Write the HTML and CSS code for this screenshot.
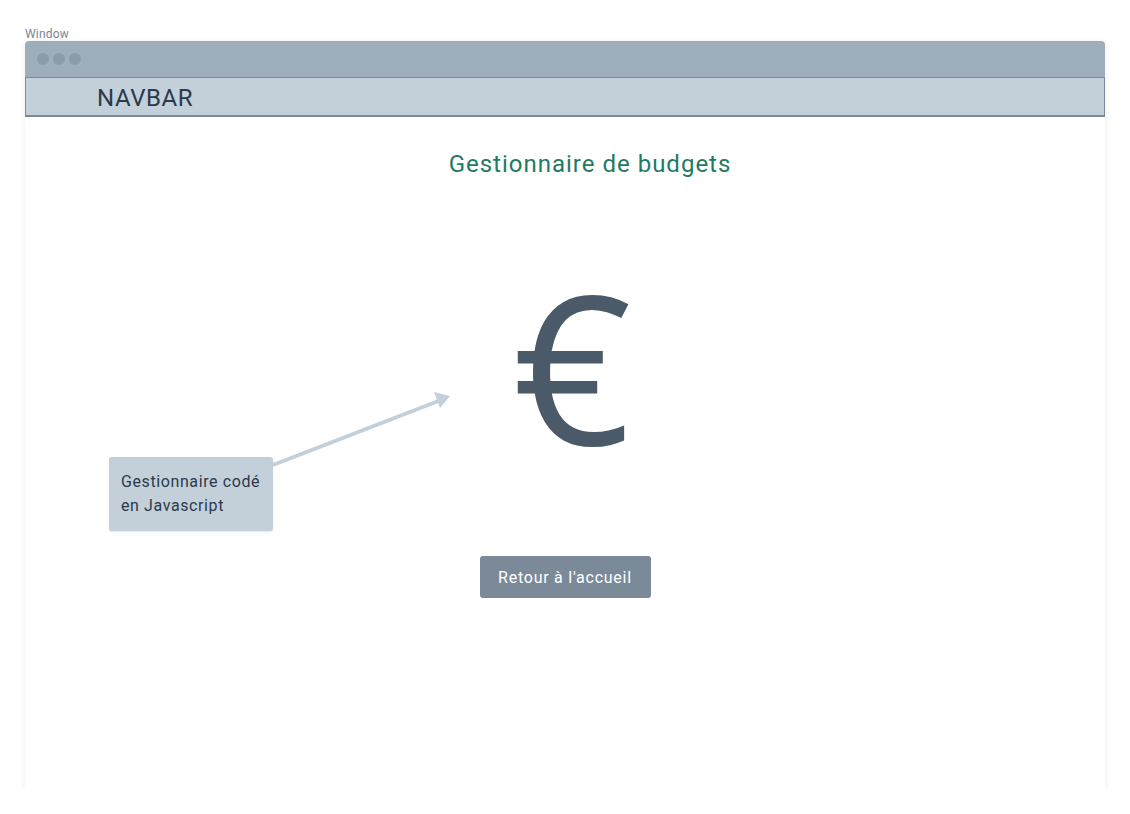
FILE: index.html
```html
<!DOCTYPE html>
<html lang="fr">
<head>
<meta charset="utf-8">
<title>Gestionnaire de budgets</title>
<link rel="stylesheet" href="styles.css">
</head>
<body>
<div class="page">
  <div class="label">Window</div>
  <div class="window">
    <div class="titlebar">
      <span class="dot"></span><span class="dot"></span><span class="dot"></span>
    </div>
    <div class="navbar">NAVBAR</div>
    <div class="content">
      <h1 class="title">Gestionnaire de budgets</h1>
      <div class="euro">€</div>
      <button class="btn">Retour à l'accueil</button>
      <svg class="arrow" width="200" height="90" viewBox="0 0 200 90">
        <line x1="2" y1="86" x2="170" y2="21" stroke="#c4d0d9" stroke-width="4"/>
        <polygon points="179,17 163,13 169,29" fill="#c4d0d9"/>
      </svg>
      <div class="note">Gestionnaire codé<br>en Javascript</div>
    </div>
  </div>
</div>
</body>
</html>
```
FILE: styles.css
```css
* { box-sizing: border-box; }
html, body { margin: 0; padding: 0; background: #fff; }
body { font-family: Roboto, "Noto Sans", sans-serif; }
.page { padding: 27px 25px 0 25px; width: 1130px; }
.label { font-size: 12px; color: #7b8692; line-height: 14px; height: 14px; letter-spacing: 0.2px; }
.window {
  width: 1080px;
  height: 748px;
  display: flex;
  flex-direction: column;
  background: #fff;
  border-radius: 4px 4px 0 0;
  box-shadow: 0 1px 6px rgba(0,0,0,0.08);
}
.titlebar {
  height: 36px;
  background: #9eadba;
  border-radius: 4px 4px 0 0;
  display: flex;
  align-items: center;
  gap: 4px;
  padding-left: 12px;
}
.dot { width: 12px; height: 12px; border-radius: 50%; background: #8c9ba8; }
.navbar {
  height: 40px;
  background: #c4d0d9;
  border: 1px solid #7b8a99;
  border-bottom-width: 2px;
  padding: 2px 0 0 71px;
  font-size: 24px;
  letter-spacing: 0.6px;
  color: #2a3a4b;
  display: flex;
  align-items: center;
}
.content {
  position: relative;
  flex: 1;
  display: flex;
  flex-direction: column;
  align-items: center;
}
.title {
  margin: 32px 0 0 50px;
  font-size: 24px;
  font-weight: 400;
  color: #1f7a63;
  letter-spacing: 1px;
  line-height: 30px;
}
.euro {
  margin-top: 76px;
  margin-left: 14px;
  font-family: "Open Sans", sans-serif;
  font-size: 208px;
  line-height: 220px;
  color: #4a5a69;
}
.btn {
  margin-top: 81px;
  width: 171px;
  height: 42px;
  border: none;
  border-radius: 3px;
  background: #7a8a99;
  color: #fff;
  font-family: Roboto, sans-serif;
  font-size: 16px;
  letter-spacing: 0.75px;
}
.arrow { position: absolute; left: 246px; top: 262px; }
.note {
  position: absolute;
  left: 84px;
  top: 340px;
  width: 164px;
  height: 74px;
  background: #c4d0d9;
  border-radius: 3px;
  padding: 13px 12px;
  font-size: 16px;
  line-height: 24px;
  letter-spacing: 0.6px;
  color: #2a3a4b;
  box-shadow: 0 1px 2px rgba(0,0,0,0.1);
}
```
